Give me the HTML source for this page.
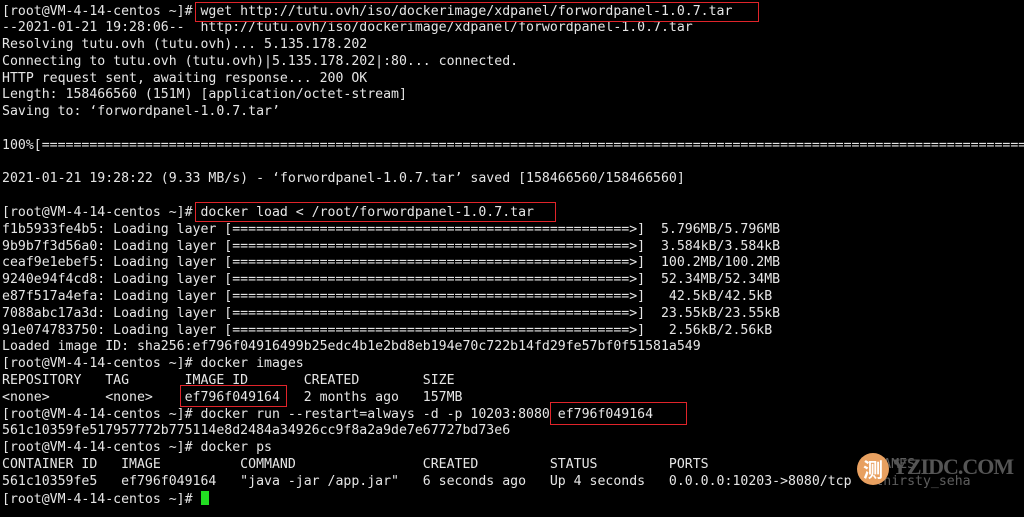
<!DOCTYPE html>
<html><head><meta charset="utf-8"><style>
html,body{margin:0;padding:0;background:#000;width:1024px;height:517px;overflow:hidden;position:relative}
pre{position:absolute;left:2px;top:3.5px;margin:0;font-family:"DejaVu Sans Mono","Liberation Mono",monospace;font-size:13.2px;line-height:16.8px;color:#e6e6e6;white-space:pre}
.b{position:absolute;border:1px solid #e0242a}
.cur{display:inline-block;width:8px;height:14px;background:#22dd22;vertical-align:-2px}
</style></head><body>
<pre>[root@VM-4-14-centos ~]# wget http://tutu.ovh/iso/dockerimage/xdpanel/forwordpanel-1.0.7.tar
--2021-01-21 19:28:06--  http://tutu.ovh/iso/dockerimage/xdpanel/forwordpanel-1.0.7.tar
Resolving tutu.ovh (tutu.ovh)... 5.135.178.202
Connecting to tutu.ovh (tutu.ovh)|5.135.178.202|:80... connected.
HTTP request sent, awaiting response... 200 OK
Length: 158466560 (151M) [application/octet-stream]
Saving to: ‘forwordpanel-1.0.7.tar’

100%[==============================================================================================================================>

2021-01-21 19:28:22 (9.33 MB/s) - ‘forwordpanel-1.0.7.tar’ saved [158466560/158466560]

[root@VM-4-14-centos ~]# docker load &lt; /root/forwordpanel-1.0.7.tar
f1b5933fe4b5: Loading layer [==================================================>]  5.796MB/5.796MB
9b9b7f3d56a0: Loading layer [==================================================>]  3.584kB/3.584kB
ceaf9e1ebef5: Loading layer [==================================================>]  100.2MB/100.2MB
9240e94f4cd8: Loading layer [==================================================>]  52.34MB/52.34MB
e87f517a4efa: Loading layer [==================================================>]   42.5kB/42.5kB
7088abc17a3d: Loading layer [==================================================>]  23.55kB/23.55kB
91e074783750: Loading layer [==================================================>]   2.56kB/2.56kB
Loaded image ID: sha256:ef796f04916499b25edc4b1e2bd8eb194e70c722b14fd29fe57bf0f51581a549
[root@VM-4-14-centos ~]# docker images
REPOSITORY   TAG       IMAGE ID       CREATED        SIZE
&lt;none&gt;       &lt;none&gt;    ef796f049164   2 months ago   157MB
[root@VM-4-14-centos ~]# docker run --restart=always -d -p 10203:8080 ef796f049164
561c10359fe517957772b775114e8d2484a34926cc9f8a2a9de7e67727bd73e6
[root@VM-4-14-centos ~]# docker ps
CONTAINER ID   IMAGE          COMMAND                CREATED         STATUS         PORTS                     NAMES
561c10359fe5   ef796f049164   "java -jar /app.jar"   6 seconds ago   Up 4 seconds   0.0.0.0:10203-&gt;8080/tcp   thirsty_seha
[root@VM-4-14-centos ~]# <span class="cur"></span></pre>
<div class="b" style="left:195px;top:2px;width:562px;height:18px"></div>
<div class="b" style="left:195px;top:202px;width:359px;height:18px"></div>
<div class="b" style="left:180px;top:385px;width:105px;height:20px"></div>
<div class="b" style="left:550px;top:402px;width:135px;height:21px"></div>
<div style="position:absolute;left:860px;top:455px;width:130px;height:34px;background:#000;opacity:0.6"></div>
<div style="position:absolute;left:857px;top:453px;width:32px;height:32px;border-radius:50%;background:#e8a060;color:#fff;font:bold 20px 'Noto Sans CJK SC',sans-serif;text-align:center;line-height:32px">测</div>
<div style="position:absolute;left:892px;top:454px;color:#555;font:bold 22px 'Liberation Serif',serif;letter-spacing:-1px">YZIDC.COM</div>
</body></html>
